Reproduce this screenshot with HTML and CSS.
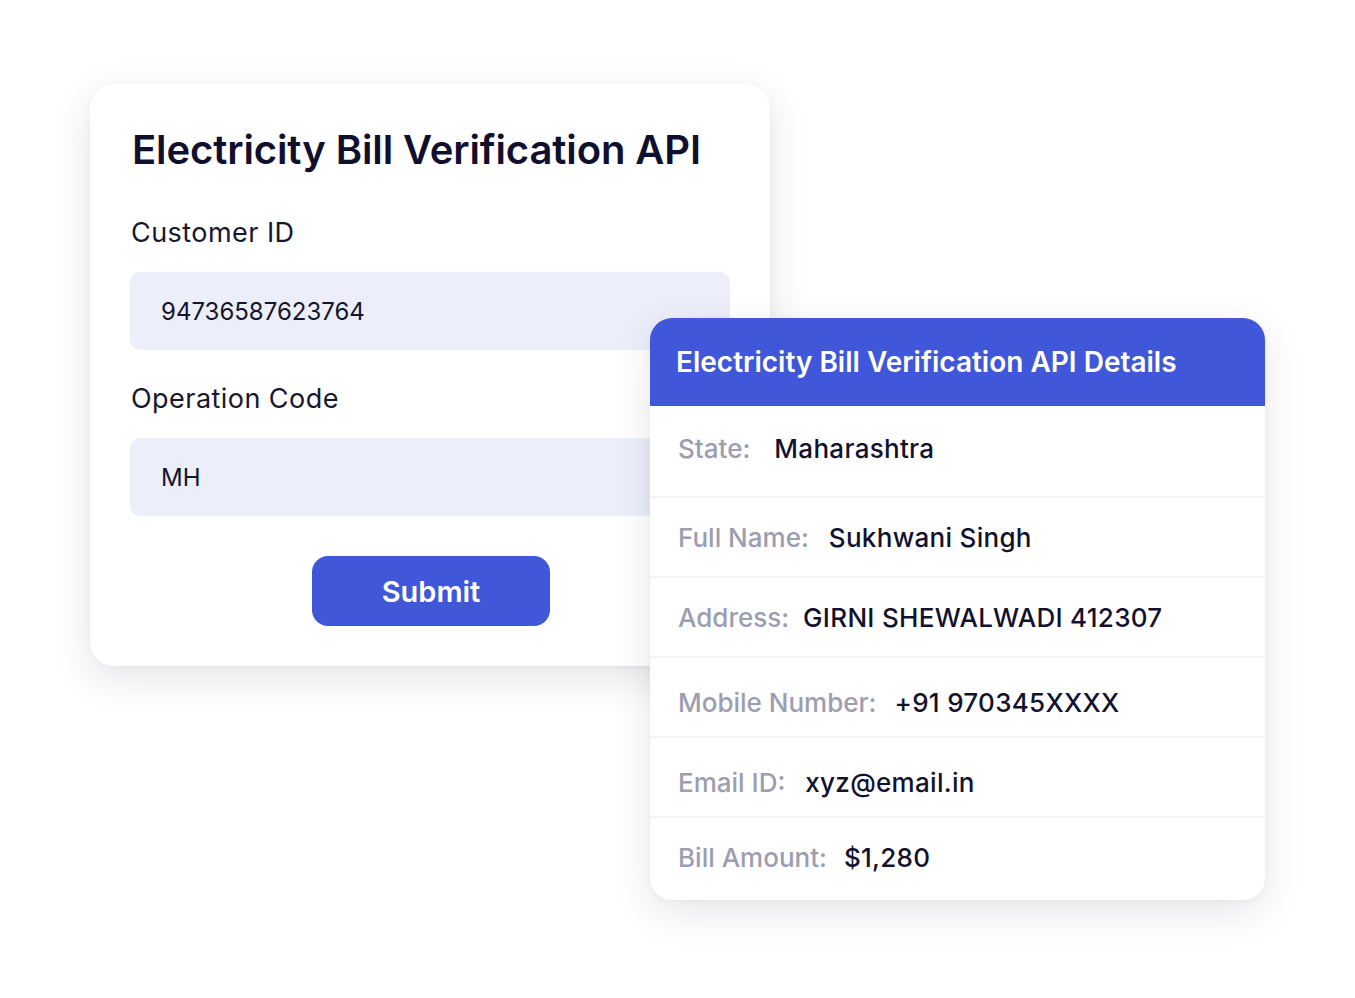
FILE: index.html
```html
<!DOCTYPE html>
<html lang="en">
<head>
<meta charset="utf-8">
<title>Electricity Bill Verification API</title>
<link rel="stylesheet" href="styles.css">
</head>
<body>
<div class="stage">
  <section class="form-card">
    <h1 class="form-title">Electricity Bill Verification API</h1>
    <div class="field">
      <div class="field-label">Customer ID</div>
      <div class="field-input">94736587623764</div>
    </div>
    <div class="field">
      <div class="field-label">Operation Code</div>
      <div class="field-input">MH</div>
    </div>
    <div class="actions">
      <button class="submit">Submit</button>
    </div>
  </section>
  <section class="details-card">
    <header class="details-head">Electricity Bill Verification API Details</header>
    <div class="details-body">
      <div class="row r1"><span class="lbl">State:</span><span class="val">Maharashtra</span></div>
      <div class="row r2"><span class="lbl">Full Name:</span><span class="val">Sukhwani Singh</span></div>
      <div class="row r3"><span class="lbl">Address:</span><span class="val">GIRNI SHEWALWADI 412307</span></div>
      <div class="row r4"><span class="lbl">Mobile Number:</span><span class="val">+91 970345XXXX</span></div>
      <div class="row r5"><span class="lbl">Email ID:</span><span class="val">xyz@email.in</span></div>
      <div class="row r6"><span class="lbl">Bill Amount:</span><span class="val">$1,280</span></div>
    </div>
  </section>
</div>
</body>
</html>
```

FILE: styles.css
```css
* { box-sizing: border-box; }
html, body { margin: 0; padding: 0; background: #ffffff; }
body {
  font-family: Inter, "Noto Sans", sans-serif;
  color: #12122e;
  width: 1355px;
  height: 998px;
  overflow: hidden;
}
.stage {
  display: grid;
  grid-template-columns: 560px 120px 495px;
  grid-template-rows: 234px 348px 234px;
  padding: 84px 0 0 90px;
}
.form-card {
  grid-column: 1 / 3;
  grid-row: 1 / 3;
  background: #ffffff;
  border-radius: 24px;
  box-shadow: 0 12px 40px rgba(20, 20, 50, 0.11), 0 2px 8px rgba(20, 20, 50, 0.03);
  padding: 40px 40px 0 40px;
  display: flex;
  flex-direction: column;
}
.form-title {
  margin: 0 0 0 2px;
  font-size: 40px;
  line-height: 52px;
  font-weight: 600;
  color: #10102e;
  letter-spacing: -0.1px;
}
.field { display: flex; flex-direction: column; }
.field-label {
  font-size: 27px;
  line-height: 34px;
  font-weight: 400;
  color: #17172f;
  letter-spacing: 0.45px;
  margin: 40px 0 22px 1px;
}
.field + .field .field-label { margin-top: 32px; }
.field-input {
  height: 78px;
  border-radius: 10px;
  background: #eceefa;
  padding: 0 31px;
  padding-top: 1px;
  display: flex;
  align-items: center;
  font-size: 24px;
  color: #15152c;
}
.actions {
  display: flex;
  justify-content: center;
  margin-top: 40px;
  padding-left: 2px;
}
.submit {
  width: 238px;
  height: 70px;
  border: none;
  border-radius: 16px;
  background: #3f57d8;
  color: #ffffff;
  font-family: Inter, "Noto Sans", sans-serif;
  font-size: 29px;
  font-weight: 600;
  cursor: pointer;
}
.details-card {
  grid-column: 2 / 4;
  grid-row: 2 / 4;
  background: #ffffff;
  border-radius: 22px;
  box-shadow: 0 12px 40px rgba(20, 20, 50, 0.10), 0 2px 8px rgba(20, 20, 50, 0.03);
  overflow: hidden;
  display: flex;
  flex-direction: column;
}
.details-head {
  height: 88px;
  background: #3f57d8;
  color: #ffffff;
  font-size: 28px;
  font-weight: 600;
  padding: 0 26px;
  display: flex;
  align-items: center;
}
.details-body { display: flex; flex-direction: column; flex: 1; }
.row {
  display: flex;
  align-items: center;
  padding: 0 28px;
  height: 80px;
  border-bottom: 2px solid #f2f3fa;
  font-size: 26px;
  font-weight: 500;
}
.row.r1 { height: 92px; padding-bottom: 6px; }
.row.r4, .row.r5 { padding-top: 10px; }
.row.r6 { border-bottom: none; flex: 1; padding-bottom: 4px; }
.lbl { color: #9c9db1; margin-right: 20px; }
.val { color: #12122e; letter-spacing: 0.3px; }
.r1 .lbl { margin-right: 24px; }
.r3 .lbl { margin-right: 14px; }
.r4 .lbl { margin-right: 18px; }
.r6 .lbl { margin-right: 17px; }
```
